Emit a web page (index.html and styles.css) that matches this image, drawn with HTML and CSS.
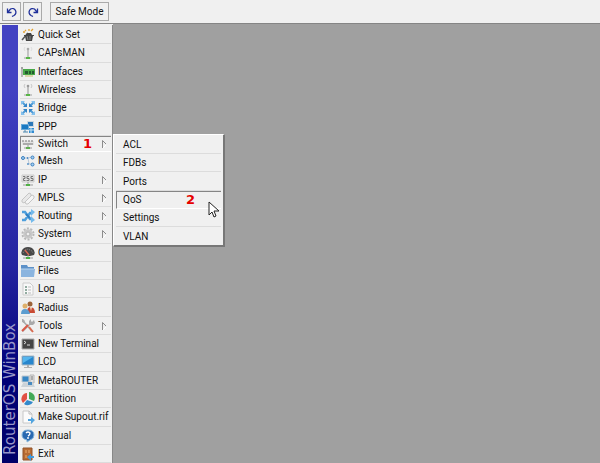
FILE: index.html
```html
<!DOCTYPE html>
<html lang="en">
<head>
<meta charset="utf-8">
<title>RouterOS WinBox</title>
<link rel="stylesheet" href="styles.css">
</head>
<body>
<header class="toolbar">
  <button class="tool" type="button" aria-label="Undo"><svg viewBox="0 0 12 12"><path d="M1.5 2.5v4h4M2 6l2.5-3A3.6 3.6 0 1 1 8 9.5l-2 1" fill="none" stroke="#20309a" stroke-width="1.3"/></svg></button>
  <button class="tool" type="button" aria-label="Redo"><svg viewBox="0 0 12 12"><path d="M10.500 2.500v4h-4M10 6L7.500 3A3.600 3.600 0 1 0 4 9.500l2 1" fill="none" stroke="#20309a" stroke-width="1.3"/></svg></button>
  <button class="tool safe" type="button">Safe Mode</button>
</header>
<div class="main">
  <aside class="brand"><span>RouterOS WinBox</span></aside>
  <nav class="menu">
    <button class="item" type="button"><svg viewBox="0 0 14 14"><path d="M1 12l6-7" stroke="#555" stroke-width="1.500"/><path d="M3 7h2l1-2h4l1 2h2v1h-1l-1 5H5L4 8H3z" fill="#444"/><path d="M6 8l1 4M9 8v4" stroke="#888"/><path d="M4 2l1 1M8 1v2M10 3l2-2M2 4h2" stroke="#e3a02c" stroke-width="1.300"/></svg>Quick Set</button>
    <button class="item" type="button"><svg viewBox="0 0 14 14"><path d="M7 3v8" stroke="#b0b0b0" stroke-width="1.400"/><path d="M4 1q-2 2 0 4M10 1q2 2 0 4" fill="none" stroke="#ddd"/><circle cx="7" cy="3" r="1.300" fill="#aaa"/><path d="M3 12h8" stroke="#bbb" stroke-width="1.500"/><path d="M5 11h4v2H5z" fill="#57b546"/></svg>CAPsMAN</button>
    <button class="item" type="button"><svg viewBox="0 0 14 14"><path d="M1 2v10M0 3h2" stroke="#999" stroke-width="1.300"/><path d="M2 4h12v6H2z" fill="#48a848"/><path d="M4 6h3v3H4zM8 6h2v3H8zM11 6h2v3h-2z" fill="#245b30"/><path d="M4 11h8" stroke="#c5bd68"/></svg>Interfaces</button>
    <button class="item" type="button"><svg viewBox="0 0 14 14"><path d="M7 3v8" stroke="#aaa" stroke-width="1.400"/><path d="M4 1q-2 2 0 4M10 1q2 2 0 4" fill="none" stroke="#c8c8c8"/><circle cx="7" cy="3" r="1.300" fill="#999"/><path d="M3 12h8" stroke="#bbb" stroke-width="1.500"/><path d="M5 11h4v2H5z" fill="#57b546"/></svg>Wireless</button>
    <button class="item" type="button"><svg viewBox="0 0 14 14"><path d="M1 1l4 4M13 1L9 5M1 13l4-4M13 13L9 9" stroke="#4f9cd8" stroke-width="2"/><path d="M0 0h4L0 4zM14 0h-4l4 4zM0 14h4l-4-4zM14 14h-4l4-4z" fill="#84c0ec"/><path d="M6 2v4H2zM8 2v4h4zM6 12V8H2zM8 12V8h4z" fill="#3584c6"/></svg>Bridge</button>
    <button class="item" type="button"><svg viewBox="0 0 14 14"><path d="M6 1h7v6H6z" fill="#ccd7df"/><path d="M7 2h5v4H7z" fill="#2c78b8"/><path d="M0 4h8v6H0z" fill="#69a9d8"/><path d="M1 5h6v4H1z" fill="#1979c2"/><path d="M2 12h5M4 10v2" stroke="#4c87ae"/><path d="M8 8h5v5H8z" fill="#328bd0"/><path d="M8 10h5M10 8v5" stroke="#c5e4f4"/></svg>PPP</button>
    <div class="branch">
      <button class="item active" type="button" aria-expanded="true"><svg viewBox="0 0 14 14"><path d="M1 4h12v4H1z" fill="#e2e2e2"/><path d="M1 4h12" stroke="#777" stroke-dasharray="2 1"/><path d="M2 7h10" stroke="#999" stroke-width="1.500"/><path d="M7 8v3M3 11h8" stroke="#999"/><path d="M5 10h4v2H5z" fill="#5fae50"/></svg>Switch<b class="step">1</b><svg class="arrow" viewBox="0 0 6 10"><path d="M1.500 9V1.500L5 5" fill="none" stroke="#8c8c8c"/><path d="M2 9L5 6" stroke="#fff"/></svg></button>
      <div class="submenu">
        <button class="item" type="button">ACL</button>
        <button class="item" type="button">FDBs</button>
        <button class="item" type="button">Ports</button>
        <button class="item active" type="button">QoS<b class="step">2</b></button>
        <button class="item" type="button">Settings</button>
        <button class="item" type="button">VLAN</button>
        <svg class="cursor" viewBox="0 0 12 18"><path d="M1 1v13l3-3 2 5 2-1-2-5h5z" fill="#fff" stroke="#222"/></svg>
      </div>
    </div>
    <button class="item" type="button"><svg viewBox="0 0 14 14"><path d="M3 4h4l4-1M7 4l1 6h3" fill="none" stroke="#b8c8d8"/><g fill="#a4d0f4" stroke="#3b7fbe"><circle cx="2" cy="4" r="1.500"/><circle cx="6.500" cy="4" r=".5"/><circle cx="11.500" cy="3.500" r="1.500"/><circle cx="7" cy="10" r=".5"/><circle cx="11.500" cy="10.500" r="1.500"/></g></svg>Mesh</button>
    <button class="item" type="button"><svg viewBox="0 0 14 14"><path d="M1 2h12v7H1z" fill="#e4e4e4" stroke="#ccc"/><path d="M2 3.500h2v2H2.500v2H4.500M8 3.500H6v2h2v2H5.500M12 3.500h-2v2h2v2H9.500" fill="none" stroke="#777"/><path d="M7 9v2M2 12h10" stroke="#999"/><path d="M5 11h4v2H5z" fill="#4fb044"/></svg>IP<svg class="arrow" viewBox="0 0 6 10"><path d="M1.500 9V1.500L5 5" fill="none" stroke="#8c8c8c"/><path d="M2 9L5 6" stroke="#fff"/></svg></button>
    <button class="item" type="button"><svg viewBox="0 0 14 14"><path d="M1 9l7-7 2 1v2l-7 7-2-1z" fill="#e8e8e8" stroke="#c5c5c5"/><path d="M4 11l7-7 2 1v2l-6 6H5z" fill="#f5f5f5" stroke="#c5c5c5"/></svg>MPLS<svg class="arrow" viewBox="0 0 6 10"><path d="M1.500 9V1.500L5 5" fill="none" stroke="#8c8c8c"/><path d="M2 9L5 6" stroke="#fff"/></svg></button>
    <button class="item" type="button"><svg viewBox="0 0 14 14"><path d="M1 3h3l5 7h2M1 11h3l5-7h2" fill="none" stroke="#4f9fdc" stroke-width="2.500"/><path d="M10 0l4 3-4 4zM10 7l4 4-4 3z" fill="#74baeb"/><path d="M5 5l4 4" stroke="#2f7fc2" stroke-width="2"/></svg>Routing<svg class="arrow" viewBox="0 0 6 10"><path d="M1.500 9V1.500L5 5" fill="none" stroke="#8c8c8c"/><path d="M2 9L5 6" stroke="#fff"/></svg></button>
    <button class="item" type="button"><svg viewBox="0 0 14 14"><circle cx="7" cy="7" r="5.500" fill="none" stroke="#b8b8b8" stroke-width="2" stroke-dasharray="2 1.450"/><circle cx="7" cy="7" r="4.700" fill="#c8c8c8"/><circle cx="7" cy="7" r="2" fill="#eee" stroke="#b4b4b4"/></svg>System<svg class="arrow" viewBox="0 0 6 10"><path d="M1.500 9V1.500L5 5" fill="none" stroke="#8c8c8c"/><path d="M2 9L5 6" stroke="#fff"/></svg></button>
    <button class="item" type="button"><svg viewBox="0 0 14 14"><path d="M1 9q-2-4 2-7 4-2 8 0 4 3 2 7l-4 1H5z" fill="#484848"/><path d="M2 7l2-3 3-1 4 2 1 2" fill="none" stroke="#888" stroke-dasharray="1 1"/><path d="M4 4l4 5" stroke="#df6952" stroke-width="1.300"/><path d="M7 9v3M2 12h10" stroke="#999"/><path d="M5 11h4v2H5z" fill="#4fb044"/></svg>Queues</button>
    <button class="item" type="button"><svg viewBox="0 0 14 14"><path d="M0 3V1h6l1 2h6v9H0z" fill="#5d91c8"/><path d="M0 5h14l-1 8H0z" fill="#8ab4df"/><path d="M0 5h13" stroke="#b8d3ee"/></svg>Files</button>
    <button class="item" type="button"><svg viewBox="0 0 14 14"><path d="M2 1h7l3 3v9H2z" fill="#f8f8f8" stroke="#ccc"/><path d="M4 5h2M4 8h2M4 11h2" stroke="#6f9182" stroke-width="1.300"/><path d="M7 5h3M7 8h3M7 11h3" stroke="#bbb"/></svg>Log</button>
    <button class="item" type="button"><svg viewBox="0 0 14 14"><circle cx="9" cy="3" r="2.500" fill="#9b6338"/><path d="M6 12q0-6 3-6 5 0 5 6z" fill="#c84932"/><circle cx="4" cy="5" r="2.500" fill="#dfb06b"/><path d="M0 13q0-5 4-5t5 5z" fill="#5c9dd0"/><path d="M9 6l1 4 1-4" fill="#f4e2c5"/></svg>Radius</button>
    <button class="item" type="button"><svg viewBox="0 0 14 14"><path d="M2 2l9 10" stroke="#aaa" stroke-width="1.600"/><path d="M1 0v3l2 1 1-2-2-2M13 1l-2 2-1-1V0L8 2v3L1 12l1 1 7-7h3l2-2z" fill="#aaa"/><path d="M1 12l6-6" stroke="#db5946" stroke-width="2"/><path d="M8 8l4 5" stroke="#d96b50" stroke-width="2"/></svg>Tools<svg class="arrow" viewBox="0 0 6 10"><path d="M1.500 9V1.500L5 5" fill="none" stroke="#8c8c8c"/><path d="M2 9L5 6" stroke="#fff"/></svg></button>
    <button class="item" type="button"><svg viewBox="0 0 14 14"><path d="M1 2h12v10H1z" fill="#444" stroke="#aaa"/><path d="M3 4l2 1.500L3 7M6 8h3" fill="none" stroke="#ddd"/></svg>New Terminal</button>
    <button class="item" type="button"><svg viewBox="0 0 14 14"><path d="M1 1h12v9H1z" fill="#2786cd" stroke="#a8b8c4"/><path d="M2 2h10L2 8z" fill="#55b5ed"/><path d="M6 10h2v2h3v1H3v-1h3z" fill="#b0b0b0"/></svg>LCD</button>
    <button class="item" type="button"><svg viewBox="0 0 14 14"><path d="M1 2h7v6H1z" fill="#3787c5" stroke="#c0c8cf"/><path d="M9 1h4v8H9z" fill="#e2e2e2" stroke="#b6b6b6"/><path d="M10 3h2M10 5h2" stroke="#777"/><path d="M2 9h10l2 4H0z" fill="#ccd3d8"/><path d="M7 8h4v3H7z" fill="#478ac0"/></svg>MetaROUTER</button>
    <button class="item" type="button"><svg viewBox="0 0 14 14"><path d="M6 7V1a6 6 0 0 0-4 10z" fill="#e14f43"/><path d="M8 7V0a6 6 0 0 1 5 9z" fill="#43aa58"/><path d="M6 8l6 2a6 6 0 0 1-9 2z" fill="#3289cc"/></svg>Partition</button>
    <button class="item" type="button"><svg viewBox="0 0 14 14"><path d="M2 1h6l3 3v9H2z" fill="#fbfbfb" stroke="#c8c8c8"/><path d="M8 1v3h3" fill="none" stroke="#bbb"/><path d="M7 9h3V7l4 3-4 4v-3H7z" fill="#51a4df"/></svg>Make Supout.rif</button>
    <button class="item" type="button"><svg viewBox="0 0 14 14"><path d="M7 1q6 0 6 5 0 4-4 5l-3 2v-2Q1 10 1 6q0-5 6-5z" fill="#2969b1" stroke="#86b7dc"/><path d="M5 4q2-2 4 0 0 2-2 3M7 8v2" fill="none" stroke="#fff" stroke-width="1.400"/></svg>Manual</button>
    <button class="item" type="button"><svg viewBox="0 0 14 14"><path d="M2 1h9v12H2z" fill="#b66a32" stroke="#925229"/><path d="M4 3h2v3H4zM7 3h2v3H7zM4 8h2v3H4z" fill="#d28c50"/><path d="M13 9h-3V7l-4 3 4 4v-3h3z" fill="#4299dc"/></svg>Exit</button>
  </nav>
  <main class="workspace"></main>
</div>
</body>
</html>
```
FILE: styles.css
```css
* { box-sizing: border-box; }

body {
  margin: 0;
  min-height: 100vh;
  display: flex;
  flex-direction: column;
  background: #f0f0f0;
  color: #111;
  font: 10px/14px Roboto, "Liberation Sans", sans-serif;
}

button { font: inherit; color: inherit; }

.toolbar {
  display: flex;
  gap: 2px;
  height: 24px;
  padding: 2px;
  border-bottom: 1px solid #858585;
}

.tool {
  display: flex;
  align-items: center;
  justify-content: center;
  width: 19px;
  height: 19px;
  padding: 0;
  background: #f0f0f0;
  border: 1px solid #aaa;
  white-space: nowrap;
}

.tool svg { width: 12px; height: 12px; }

.safe {
  width: 59px;
  margin-left: 6px;
}

.main {
  flex: 1;
  display: flex;
  padding: 1px 0 0 2px;
  background: #f0f0f0;
}

.brand {
  display: flex;
  align-items: flex-end;
  justify-content: center;
  width: 16px;
  padding-bottom: 8px;
  background: linear-gradient(#4141c2 15%, #2424a0 55%, #000078 80%, #000068);
  color: #9696c8;
  font: 15px/16px "DejaVu Sans", sans-serif;
}

.brand span {
  writing-mode: vertical-rl;
  transform: rotate(180deg);
  white-space: nowrap;
}

.menu {
  display: flex;
  flex-direction: column;
  width: 95px;
  padding: 1px 1px 0 2px;
  border-right: 1px solid #888;
}

.item {
  flex: 1 1 0;
  display: flex;
  align-items: center;
  gap: 3px;
  width: 100%;
  padding: 1px 4px 0 1px;
  background: #f0f0f0;
  border: 0;
  border-bottom: 1px solid #dcdcdc;
  text-align: left;
  white-space: nowrap;
}

.item > svg {
  flex: none;
  width: 14px;
  height: 14px;
}

.item.active {
  padding-top: 0;
  padding-left: 0;
  border-top: 1px solid #858585;
  border-left: 1px solid #858585;
  border-bottom-color: #fff;
}

.branch {
  position: relative;
  flex: 1 1 0;
  display: flex;
}

.step {
  margin-left: auto;
  color: #e60000;
  font: bold 13px/14px "DejaVu Sans", sans-serif;
}

.item > .arrow {
  width: 6px;
  height: 10px;
  margin-left: auto;
}

.item > .step + .arrow { margin-left: 6px; }

.submenu {
  position: absolute;
  z-index: 1;
  top: -2px;
  left: 100%;
  display: flex;
  flex-direction: column;
  width: 112px;
  height: 113px;
  margin-left: 2px;
  padding: 1px 2px 0;
  background: #f0f0f0;
  border: 1px solid #fff;
  border-right: 2px solid #777;
  border-bottom: 2px solid #777;
}

.submenu .item { padding-left: 7px; }
.submenu .item.active { padding-left: 6px; }
.submenu .item:nth-child(6) { border-bottom: 0; }
.submenu .step { margin-right: 22px; }

.cursor {
  position: absolute;
  right: 3px;
  bottom: 26px;
  width: 12px;
  height: 18px;
}

.workspace {
  flex: 1;
  margin-top: -1px;
  background: #a0a0a0;
}
```
